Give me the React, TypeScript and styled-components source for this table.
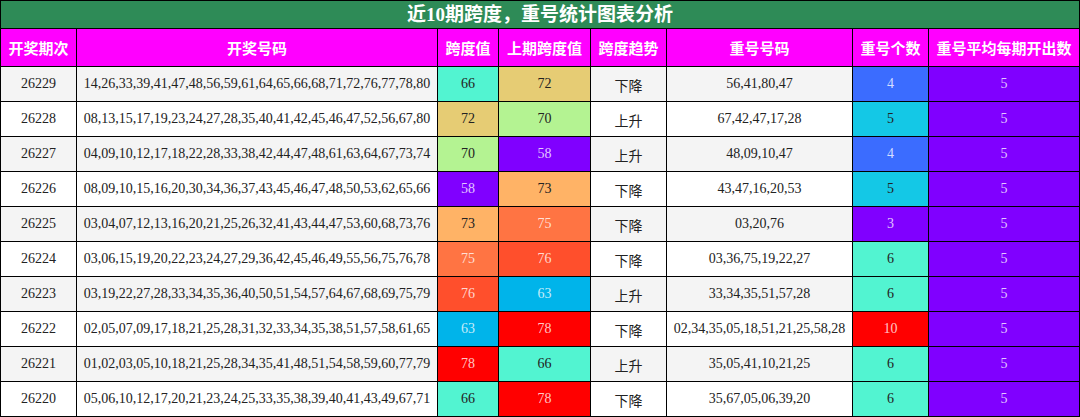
import React from "react";
import styled, { createGlobalStyle } from "styled-components";

const GlobalStyle = createGlobalStyle`
  html, body { margin: 0; padding: 0; background: #ffffff; }
  body { font-family: "Liberation Serif", "Noto Sans CJK SC", serif; }
`;

const Board = styled.div`
  display: grid;
  grid-template-columns: 75px 360px 60px 91px 75px 185px 75px 150px;
  grid-template-rows: 27px 37px repeat(10, 34px);
  gap: 1px;
  padding: 1px;
  width: 1080px;
  box-sizing: border-box;
  background: #000000;
`;

const Title = styled.div`
  grid-column: 1 / -1;
  background: #2e8b57;
  color: #ffffff;
  font-family: "Liberation Serif", "Noto Sans CJK SC", serif;
  font-weight: bold;
  font-size: 19px;
  display: flex;
  align-items: center;
  justify-content: center;
  line-height: 1;
`;

const HeadCell = styled.div`
  background: #ff00ff;
  color: #ffffff;
  font-family: "Liberation Serif", "Noto Sans CJK SC", sans-serif;
  font-weight: bold;
  font-size: 15px;
  display: flex;
  align-items: center;
  justify-content: center;
  white-space: nowrap;
`;

const Cell = styled.div<{ $bg: string; $light?: boolean }>`
  background: ${(p) => p.$bg};
  color: ${(p) => (p.$light ? "rgba(255,255,255,0.78)" : "#222222")};
  font-family: "Liberation Serif", "Noto Sans CJK SC", serif;
  font-size: 14px;
  display: flex;
  align-items: center;
  justify-content: center;
  white-space: nowrap;
`;

const TrendText = styled.span`
  font-family: "Noto Sans CJK SC", sans-serif;
  font-size: 14px;
  color: #222222;
  padding-top: 1px;
`;

type Swatch = { bg: string; light: boolean };

const spanColor: Record<number, Swatch> = {
  66: { bg: "#52f4d1", light: false },
  72: { bg: "#e6cc74", light: false },
  70: { bg: "#b4f392", light: false },
  58: { bg: "#8000ff", light: true },
  73: { bg: "#ffb366", light: false },
  75: { bg: "#ff7443", light: true },
  76: { bg: "#ff4f2c", light: true },
  63: { bg: "#00b4ea", light: true },
  78: { bg: "#ff0000", light: true },
};

const countColor: Record<number, Swatch> = {
  3: { bg: "#8000ff", light: true },
  4: { bg: "#3b6cff", light: true },
  5: { bg: "#14c8e6", light: false },
  6: { bg: "#52f4d1", light: false },
  10: { bg: "#ff0000", light: true },
};

const rows = [
  ["26229", "14,26,33,39,41,47,48,56,59,61,64,65,66,68,71,72,76,77,78,80", 66, 72, "下降", "56,41,80,47", 4],
  ["26228", "08,13,15,17,19,23,24,27,28,35,40,41,42,45,46,47,52,56,67,80", 72, 70, "上升", "67,42,47,17,28", 5],
  ["26227", "04,09,10,12,17,18,22,28,33,38,42,44,47,48,61,63,64,67,73,74", 70, 58, "上升", "48,09,10,47", 4],
  ["26226", "08,09,10,15,16,20,30,34,36,37,43,45,46,47,48,50,53,62,65,66", 58, 73, "下降", "43,47,16,20,53", 5],
  ["26225", "03,04,07,12,13,16,20,21,25,26,32,41,43,44,47,53,60,68,73,76", 73, 75, "下降", "03,20,76", 3],
  ["26224", "03,06,15,19,20,22,23,24,27,29,36,42,45,46,49,55,56,75,76,78", 75, 76, "下降", "03,36,75,19,22,27", 6],
  ["26223", "03,19,22,27,28,33,34,35,36,40,50,51,54,57,64,67,68,69,75,79", 76, 63, "上升", "33,34,35,51,57,28", 6],
  ["26222", "02,05,07,09,17,18,21,25,28,31,32,33,34,35,38,51,57,58,61,65", 63, 78, "下降", "02,34,35,05,18,51,21,25,58,28", 10],
  ["26221", "01,02,03,05,10,18,21,25,28,34,35,41,48,51,54,58,59,60,77,79", 78, 66, "上升", "35,05,41,10,21,25", 6],
  ["26220", "05,06,10,12,17,20,21,23,24,25,33,35,38,39,40,41,43,49,67,71", 66, 78, "下降", "35,67,05,06,39,20", 6],
] as const;

const headers = ["开奖期次", "开奖号码", "跨度值", "上期跨度值", "跨度趋势", "重号号码", "重号个数", "重号平均每期开出数"];

export default function App() {
  return (
    <>
      <GlobalStyle />
      <Board>
        <Title>近10期跨度，重号统计图表分析</Title>
        {headers.map((h) => (
          <HeadCell key={h}>{h}</HeadCell>
        ))}
        {rows.map((r, i) => {
          const base = i % 2 === 0 ? "#f4f4f4" : "#ffffff";
          const [issue, nums, span, prev, trend, rep, cnt] = r;
          const s = spanColor[span];
          const p = spanColor[prev];
          const c = countColor[cnt];
          return (
            <React.Fragment key={issue}>
              <Cell $bg={base}>{issue}</Cell>
              <Cell $bg={base}>{nums}</Cell>
              <Cell $bg={s.bg} $light={s.light}>{span}</Cell>
              <Cell $bg={p.bg} $light={p.light}>{prev}</Cell>
              <Cell $bg={base}><TrendText>{trend}</TrendText></Cell>
              <Cell $bg={base}>{rep}</Cell>
              <Cell $bg={c.bg} $light={c.light}>{cnt}</Cell>
              <Cell $bg="#8000ff" $light>5</Cell>
            </React.Fragment>
          );
        })}
      </Board>
    </>
  );
}
